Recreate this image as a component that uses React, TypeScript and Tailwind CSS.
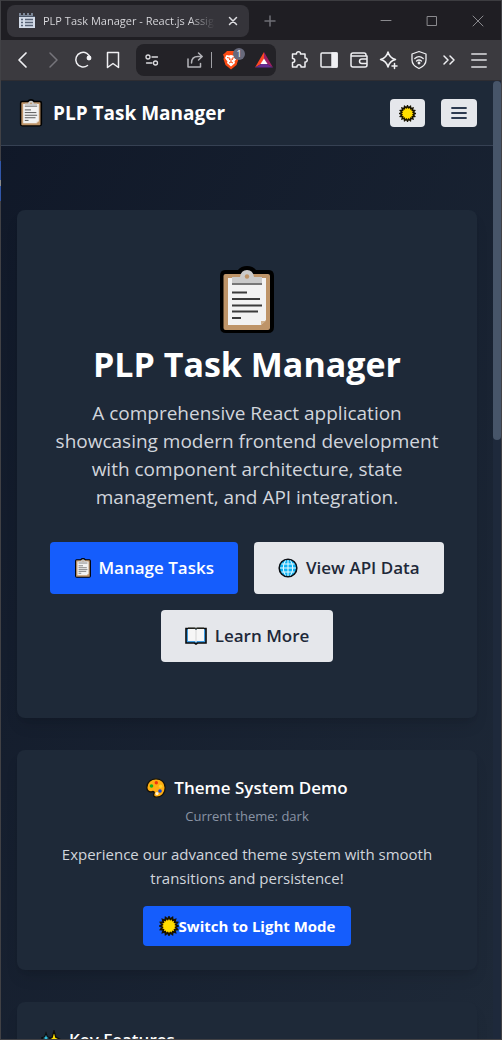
import type { ReactNode } from "react";

function Clipboard({ className }: { className: string }) {
  return (
    <svg viewBox="0 0 56 68" className={className} aria-hidden="true">
      <path d="M6 4H19Q22 0 28 0T37 4H50Q55 4 55 10V61Q55 67 49 67H7Q1 67 1 61V10Q1 4 6 4Z" fill="#000" />
      <rect x="4.500" y="8" width="46.500" height="56" rx="2" fill="#be9468" />
      <path d="M9 12H47V54L42 59H9Z" fill="#f2f2f2" />
      <path d="M42 59V55H47Z" fill="#cfb08c" />
      <path d="M13 11H21Q22 4 28 4T35 11H43V17H13Z" fill="#cacaca" />
      <circle cx="28" cy="10.500" r="2.200" fill="#be9468" />
      <path d="M13 18H43" stroke="#777" strokeWidth="2" />
      <path d="M13 26.500H28M13 33H41M13 39.500H43M13 45.500H39M13 52H22" stroke="#3b3b3b" strokeWidth="2" />
    </svg>
  );
}

function Sun({ className }: { className: string }) {
  const points = Array.from({ length: 32 }, (_, i) => {
    const radius = i % 2 ? 6.8 : 9;
    const angle = (i * Math.PI) / 16;
    return `${10 + radius * Math.cos(angle)},${10 + radius * Math.sin(angle)}`;
  }).join(" ");
  return (
    <svg viewBox="0 0 20 20" className={className} aria-hidden="true">
      <polygon points={points} fill="#ffd000" stroke="#171300" strokeWidth="1.800" />
      <circle cx="10" cy="10" r="5.500" fill="#ffdf00" />
    </svg>
  );
}

function Globe() {
  return (
    <svg viewBox="0 0 20 20" className="size-5" aria-hidden="true">
      <circle cx="10" cy="10" r="8.800" fill="#0fb4f5" stroke="#0b0f14" strokeWidth="1.600" />
      <path d="M2 10H18M3.500 6H16.500M3.500 14H16.500M10 2V18M7.500 2.500Q3 10 7.500 17.500M12.500 2.500Q17 10 12.500 17.500" fill="none" stroke="#e9fbff" strokeWidth="1" />
    </svg>
  );
}

function Book() {
  return (
    <svg viewBox="0 0 22 18" className="h-[18px] w-[22px]" aria-hidden="true">
      <path d="M1 1.500H21V16H12.500L11 17L9.500 16H1Z" fill="#3d9be0" stroke="#0a0a0a" strokeWidth="1.600" />
      <path d="M3 2H10L11 3L12 2H19V14H12L11 15L10 14H3Z" fill="#f6f6f6" />
      <path d="M11 3V15" stroke="#d4d4d4" />
      <path d="M3 1H9.500L11 2L12.500 1H19" fill="none" stroke="#36392f" strokeWidth="1.200" />
    </svg>
  );
}

function Palette() {
  return (
    <svg viewBox="0 0 20 20" className="size-5" aria-hidden="true">
      <path d="M10 .8C15.500.8 19.200 4.600 19.200 9.800C19.200 15.500 15.500 19.200 10.500 19.200C8 19.200 7 17.500 8 15.500C8.700 14 7.600 13.200 6.200 13.600C3 14.500.8 12.500.8 9.500C.8 4.500 4.800.8 10 .8Z" fill="#ffae12" stroke="#141008" strokeWidth="1.300" />
      <circle cx="5.500" cy="8" r="1.800" fill="#16b01c" />
      <circle cx="10.300" cy="4.800" r="1.700" fill="#f0350f" />
      <circle cx="14.600" cy="8.300" r="1.700" fill="#ffd32a" />
      <circle cx="14" cy="13" r="1.800" fill="#1442d8" />
      <circle cx="11" cy="15.600" r="1.600" fill="#fff2d5" />
    </svg>
  );
}

function Sparkles() {
  return (
    <svg viewBox="0 0 20 20" className="size-5" aria-hidden="true">
      <path d="M13 .8L14.800 7.200L19.400 9.500L14.800 11.800L13 18.500L11.200 11.800L7 9.500L11.200 7.200Z" fill="#ffe100" stroke="#0d0d0d" strokeWidth="1.300" />
      <path d="M5 3L6.300 6.700L9.500 8L6.300 9.300L5 13L3.700 9.300L.5 8L3.700 6.700Z" fill="#35c9ee" stroke="#0d0d0d" strokeWidth="1.200" />
    </svg>
  );
}

function Favicon() {
  return (
    <svg viewBox="0 0 16 16" className="size-4 shrink-0" aria-hidden="true">
      <path d="M0 3H16V15H0Z" fill="#d3dbe8" />
      <path d="M0 0H2V2H4V0H6V2H8V0H10V2H12V0H14V3H0Z" fill="#7c8798" />
      <path d="M0 3.500H16" stroke="#4a5568" strokeWidth="1" />
      <path d="M2 6.500H4M2 9.500H4M2 12.500H4M6 6.500H14M6 9.500H14M6 12.500H14" stroke="#566174" strokeWidth="1.400" />
    </svg>
  );
}

function LineIcon({ children, className = "size-5", width = 1.5 }: { children: ReactNode; className?: string; width?: number }) {
  return (
    <svg viewBox="0 0 20 20" className={className} fill="none" stroke="currentColor" strokeWidth={width} strokeLinecap="round" strokeLinejoin="round" aria-hidden="true">
      {children}
    </svg>
  );
}

function ToolButton({ label, children, className = "text-[#f0f0f3]" }: { label: string; children: ReactNode; className?: string }) {
  return (
    <button type="button" aria-label={label} className={`flex h-8 w-[30px] shrink-0 items-center justify-center ${className}`}>
      {children}
    </button>
  );
}

function TabStrip() {
  return (
    <div className="flex h-10 shrink-0 items-center border-t border-[#3c3c40] bg-[#1f1e23] pl-1.5">
      <div className="flex h-8 w-[242px] shrink-0 items-center rounded-lg bg-[#35343a] pr-1.5 pl-3 text-[#dedee2]">
        <Favicon />
        <span className="ml-2 flex-1 overflow-hidden bg-linear-to-r from-[#dedee2] from-85% to-transparent bg-clip-text text-[11px] leading-4 whitespace-nowrap text-transparent">
          PLP Task Manager - React.js Assignment
        </span>
        <button type="button" aria-label="Close tab" className="ml-2 flex size-5 items-center justify-center">
          <LineIcon><path d="M6.500 6.500L13.500 13.500M13.500 6.500L6.500 13.500" /></LineIcon>
        </button>
      </div>
      <button type="button" aria-label="New tab" className="ml-[11px] flex size-5 items-center justify-center text-[#6f6f75]">
        <LineIcon><path d="M10 5V15M5 10H15" /></LineIcon>
      </button>
      <div className="ml-auto flex text-[#8a8a8e]">
        <button type="button" aria-label="Minimize" className="flex h-8 w-[46px] items-center justify-center">
          <LineIcon width={1}><path d="M5 9.500H15" /></LineIcon>
        </button>
        <button type="button" aria-label="Maximize" className="flex h-8 w-[46px] items-center justify-center">
          <LineIcon width={1}><path d="M5.500 5.500H14.500V14.500H5.500Z" /></LineIcon>
        </button>
        <button type="button" aria-label="Close window" className="flex h-8 w-[46px] items-center justify-center">
          <LineIcon width={1}><path d="M5 5L15 15M15 5L5 15" /></LineIcon>
        </button>
      </div>
    </div>
  );
}

function Toolbar() {
  return (
    <div className="flex h-[41px] shrink-0 items-center border-b border-[#2e2d32] bg-[#3b3a3f] px-[7px]">
      <ToolButton label="Back"><LineIcon width={1.7}><path d="M13 3L6 10L13 17" /></LineIcon></ToolButton>
      <ToolButton label="Forward" className="text-[#76757b]"><LineIcon><path d="M7 3L14 10L7 17" /></LineIcon></ToolButton>
      <ToolButton label="Reload">
        <LineIcon>
          <path d="M14.500 15.500A7.300 7.300 0 1 1 17.300 8.500" />
          <circle cx="16" cy="8" r="1.700" fill="currentColor" />
        </LineIcon>
      </ToolButton>
      <ToolButton label="Bookmark"><LineIcon><path d="M4.500 2.500H15.500V17.500L10 13.500L4.500 17.500Z" /></LineIcon></ToolButton>
      <div className="mx-2 flex h-8 min-w-0 flex-1 items-center justify-between rounded-lg bg-[#232227] pr-0.5 pl-1.5 text-[#dcdce0]">
        <button type="button" aria-label="Site settings">
          <LineIcon width={1.3}><circle cx="6" cy="7" r="2" /><path d="M10 7H15.500M4.500 13H10" /><circle cx="13.500" cy="13" r="2" /></LineIcon>
        </button>
        <div className="flex items-center">
          <button type="button" aria-label="Share" className="text-[#b4b4b9]">
            <LineIcon>
              <path d="M3 9V17H15.500V13.500M6.500 13C6.500 9 9 6.500 13 6.500H17M13.500 3L17.200 6.500L13.500 10" />
            </LineIcon>
          </button>
          <span className="ml-1.5 h-4 w-px bg-[#a0a0a5]" />
          <button type="button" aria-label="Brave Shields, 1 blocked" className="relative ml-2 flex h-8 w-[22px] items-center justify-center">
            <svg viewBox="0 0 18 20" className="h-5 w-[18px]" aria-hidden="true">
              <path d="M5 1H13L15 3L17 4.500L16 7L16.500 9L14.500 15L9 19.500L3.500 15L1.500 9L2 7L1 4.500L3 3Z" fill="#fb4b14" />
              <path d="M4.500 5L7 5.500L9 5L11 5.500L13.500 5L15 8L12.500 11.500L13 13L9 16.500L5 13L5.500 11.500L3 8Z" fill="#fff" />
              <path d="M5 7.500L8 8.200L7.500 10M13 7.500L10 8.200L10.500 10M9 9V12M7 13L9 12L11 13" fill="none" stroke="#fb4b14" strokeWidth="1" />
            </svg>
            <span className="absolute top-1 right-[-3px] flex h-3 w-3 items-center justify-center rounded-md bg-[#67697b] text-[9px] leading-3 text-white">1</span>
          </button>
          <button type="button" aria-label="Rewards" className="ml-3">
            <svg viewBox="0 0 20 20" className="size-5" aria-hidden="true">
              <path d="M10 2L1 17.500L7 14L10 9Z" fill="#ff4724" />
              <path d="M10 2L19 17.500L13 14L10 9Z" fill="#9e1f63" />
              <path d="M1 17.500H19L13 14H7Z" fill="#662d91" />
              <path d="M10 8.500L13.500 14H6.500Z" fill="#fff" />
            </svg>
          </button>
        </div>
      </div>
      <ToolButton label="Extensions">
        <LineIcon>
          <path d="M3.500 4H7.500C7 1 12 1 11.500 4H16V8C19 7.500 19 12.500 16 12V17H12C12.500 14 7.500 14 8 17H3.500V12.500C6.500 12.500 6.500 8.500 3.500 8.500Z" />
        </LineIcon>
      </ToolButton>
      <ToolButton label="Sidebar"><LineIcon><rect x="2" y="3" width="16" height="14" rx="1" /><path d="M13 3H18V17H13Z" fill="currentColor" /></LineIcon></ToolButton>
      <ToolButton label="Wallet"><LineIcon><path d="M17 6V5Q17 3 15 3H4Q2 3 2 5V15Q2 17 4 17H16Q18 17 18 15V6H2M18 9H13Q10.500 9 10.500 11.200T13 13.500H18" /></LineIcon></ToolButton>
      <ToolButton label="Leo AI"><LineIcon><path d="M9 2Q10.500 8 16.500 9.500Q10.500 11 9 17Q7.500 11 1.500 9.500Q7.500 8 9 2ZM15.500 13.500V18.500M13 16H18" /></LineIcon></ToolButton>
      <ToolButton label="VPN"><LineIcon width={1.3}><path d="M10 1.500L17 4V10Q17 15.500 10 18.500Q3 15.500 3 10V4ZM5.800 8.500Q10 4.800 14.200 8.500M7.500 11Q10 9 12.500 11" /><circle cx="10" cy="13" r=".8" fill="currentColor" /></LineIcon></ToolButton>
      <ToolButton label="More tools"><LineIcon><path d="M5 6L9 10L5 14M11 6L15 10L11 14" /></LineIcon></ToolButton>
      <ToolButton label="Menu" className="text-[#b6b6ba]"><LineIcon width={2}><path d="M3 4H17M3 10H17M3 17H17" /></LineIcon></ToolButton>
    </div>
  );
}

function Card({ children, className }: { children: ReactNode; className: string }) {
  return <section className={`rounded-lg bg-[#1e2938] shadow-lg shadow-black/10 ${className}`}>{children}</section>;
}

export default function App() {
  return (
    <div className="flex h-screen flex-col overflow-hidden border-r border-b border-[#414145] bg-[linear-gradient(#414145_161px,#3156a8_161px_180px,#8b8b8b_180px_186px,#3156a8_186px_201px,#414145_201px)] pl-px font-['Open_Sans','Noto_Sans',sans-serif] text-white">
      <TabStrip />
      <Toolbar />
      <div className="flex min-h-0 flex-1 bg-[#1e293b]">
        <div className="min-w-0 flex-1 overflow-hidden bg-linear-to-br from-[#101828] to-[#1e2938]">
          <header className="flex h-[65px] items-center border-b border-[#364153] bg-[#1e2938] px-4">
            <a href="#home" className="flex items-center gap-2.5 pl-0.5 text-[19px] leading-7 font-bold">
              <Clipboard className="h-7 w-6" />
              PLP Task Manager
            </a>
            <div className="ml-auto flex gap-4">
              <button type="button" aria-label="Toggle theme" className="flex h-7 w-[35px] items-center justify-center rounded bg-[#e5e7eb]">
                <Sun className="size-[17px]" />
              </button>
              <button type="button" aria-label="Open menu" className="flex h-7 w-9 items-center justify-center rounded bg-[#e5e7eb] text-[#2c3a50]">
                <LineIcon width={1.8}><path d="M3 5H17M3 10H17M3 15H17" /></LineIcon>
              </button>
            </div>
          </header>
          <main className="flex flex-col gap-8 px-4 pt-16">
            <Card className="flex flex-col items-center px-8 py-14 text-center">
              <Clipboard className="h-[68px] w-14" />
              <h1 className="mt-2.5 text-[34px] leading-10 font-bold">PLP Task Manager</h1>
              <p className="mt-[15px] text-[19px] leading-7 text-[#d1d5dc]">
                A comprehensive React application showcasing modern frontend development with component architecture, state management, and API integration.
              </p>
              <div className="mt-[31px] flex flex-wrap justify-center gap-4 text-[17px] leading-7 font-semibold text-[#1e2939]">
                <button type="button" className="flex h-[52px] items-center gap-1.5 rounded bg-[#155dfc] px-6 text-white">
                  <Clipboard className="h-5 w-[18px]" />
                  Manage Tasks
                </button>
                <button type="button" className="flex h-[52px] items-center gap-2 rounded bg-[#e5e7eb] px-6">
                  <Globe />
                  View API Data
                </button>
                <button type="button" className="flex h-[52px] items-center gap-2 rounded bg-[#e5e7eb] px-6">
                  <Book />
                  Learn More
                </button>
              </div>
            </Card>
            <Card className="flex flex-col items-center p-6 text-center">
              <h2 className="flex items-center gap-2 text-[17px] leading-7 font-semibold">
                <Palette />
                Theme System Demo
              </h2>
              <p className="mt-1 text-[13px] leading-5 text-[#8a94a5]">Current theme: dark</p>
              <p className="mt-4 text-[15px] leading-6 text-[#d1d5dc]">
                Experience our advanced theme system with smooth transitions and persistence!
              </p>
              <button type="button" className="mt-4 flex h-10 items-center rounded bg-[#155dfc] px-4 text-[15px] font-bold">
                <Sun className="size-5" />
                Switch to Light Mode
              </button>
            </Card>
            <Card className="p-6">
              <h2 className="flex items-center gap-2 text-[17px] leading-7 font-semibold">
                <Sparkles />
                Key Features
              </h2>
            </Card>
          </main>
        </div>
        <div className="w-2 shrink-0">
          <div className="h-[37.5%] rounded-full bg-[#475569]" />
        </div>
      </div>
    </div>
  );
}
